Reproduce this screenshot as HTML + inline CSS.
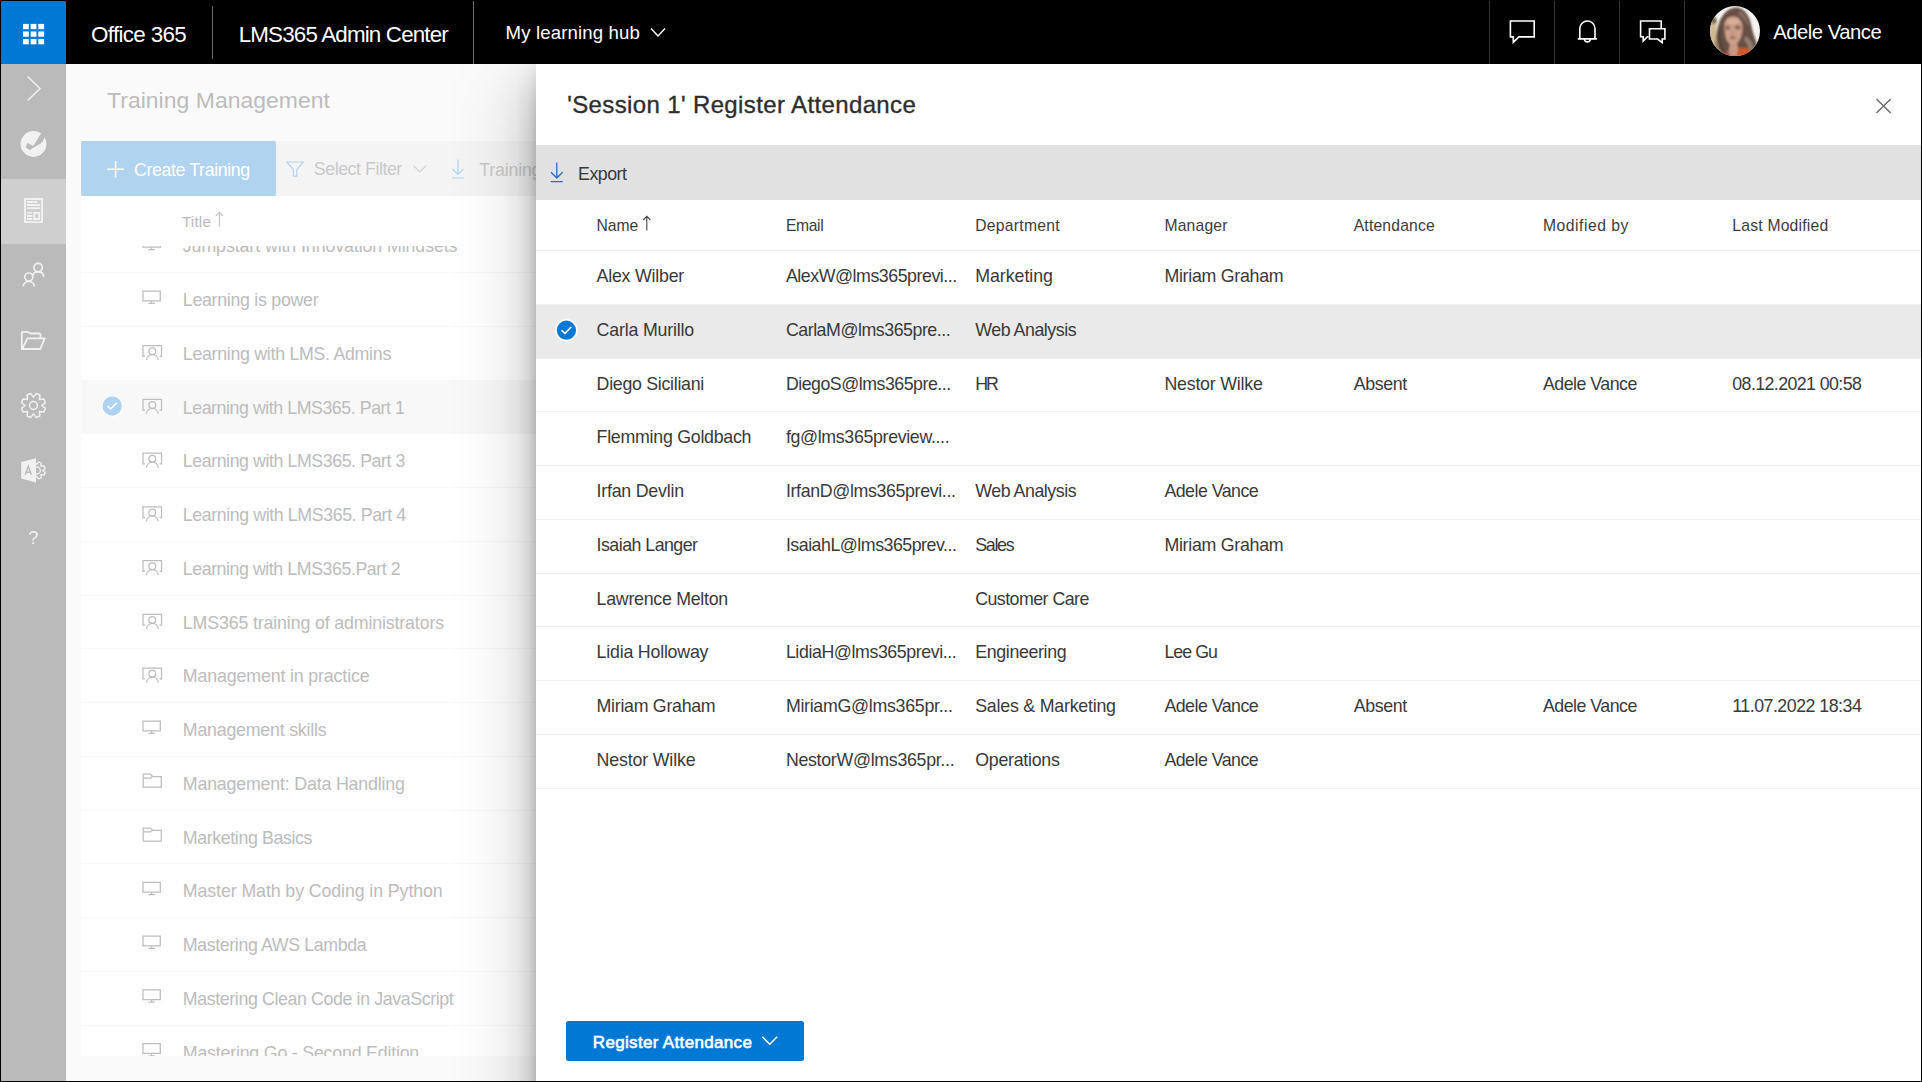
<!DOCTYPE html>
<html><head><meta charset="utf-8"><title>LMS365 Admin Center</title>
<style>
html,body{margin:0;padding:0;}
body{width:1922px;height:1082px;overflow:hidden;background:#000;font-family:"Liberation Sans", sans-serif;position:relative;}
.a{position:absolute;}
.t{position:absolute;white-space:pre;font-family:"Liberation Sans", sans-serif;}
svg{position:absolute;overflow:visible;}
</style></head><body>
<!-- main background -->
<div class="a" style="left:1px;top:64px;width:1920px;height:1017px;background:#fafafa"></div>
<!-- sidebar -->
<div class="a" style="left:1px;top:64px;width:65px;height:1017px;background:#bababa"></div>
<div class="a" style="left:1px;top:179px;width:65px;height:65px;background:#cfcfcf"></div>
<!-- left command bar -->
<div class="a" style="left:81px;top:141px;width:455px;height:55px;background:#f4f4f4"></div>
<div class="a" style="left:81px;top:141px;width:195px;height:55px;background:#b0d3f0;border-radius:2px"></div>
<!-- list white area -->
<div class="a" style="left:81px;top:196px;width:455px;height:860px;background:#fff"></div>
<div class="a" style="left:81px;top:379.8px;width:455px;height:53.75px;background:#f8f8f8"></div>
<div class="a" id="listclip" style="left:0;top:246.3px;width:536px;height:809.7px;overflow:hidden">
 <div class="a" style="left:0;top:-246.3px;width:536px;height:1082px">
 <div class="a" style="left:81px;top:271.6px;width:455px;height:1px;background:#f8f8f8"></div><div class="a" style="left:81px;top:325.6px;width:455px;height:1px;background:#f8f8f8"></div><div class="a" style="left:81px;top:379.6px;width:455px;height:1px;background:#f8f8f8"></div><div class="a" style="left:81px;top:432.6px;width:455px;height:1px;background:#f8f8f8"></div><div class="a" style="left:81px;top:486.6px;width:455px;height:1px;background:#f8f8f8"></div><div class="a" style="left:81px;top:540.6px;width:455px;height:1px;background:#f8f8f8"></div><div class="a" style="left:81px;top:594.6px;width:455px;height:1px;background:#f8f8f8"></div><div class="a" style="left:81px;top:647.6px;width:455px;height:1px;background:#f8f8f8"></div><div class="a" style="left:81px;top:701.6px;width:455px;height:1px;background:#f8f8f8"></div><div class="a" style="left:81px;top:755.6px;width:455px;height:1px;background:#f8f8f8"></div><div class="a" style="left:81px;top:809.6px;width:455px;height:1px;background:#f8f8f8"></div><div class="a" style="left:81px;top:862.6px;width:455px;height:1px;background:#f8f8f8"></div><div class="a" style="left:81px;top:916.6px;width:455px;height:1px;background:#f8f8f8"></div><div class="a" style="left:81px;top:970.6px;width:455px;height:1px;background:#f8f8f8"></div><div class="a" style="left:81px;top:1024.6px;width:455px;height:1px;background:#f8f8f8"></div><div class="a" style="left:81px;top:1077.6px;width:455px;height:1px;background:#f8f8f8"></div>
 <svg class="a" style="left:0;top:0" width="536" height="1082" viewBox="0 0 536 1082" fill="none" stroke="#bdbdbd" stroke-width="1.25"><path d="M143,237.5 H160.3 V247.2 H143 Z M151.6,247.2 V249.5 M148.4,249.7 H154.9" /><path d="M143,291.2 H160.3 V300.9 H143 Z M151.6,300.9 V303.2 M148.4,303.4 H154.9" /><path d="M145,356.3 H143 V345.6 H161.5 V356.3 H159.5" /><circle cx="152.3" cy="351.2" r="3.4" /><path d="M146.4,360.1 a6,6.2 0 0 1 11.9,0" /><path d="M145,410.1 H143 V399.3 H161.5 V410.1 H159.5" /><circle cx="152.3" cy="405.0" r="3.4" /><path d="M146.4,413.9 a6,6.2 0 0 1 11.9,0" /><path d="M145,463.8 H143 V453.1 H161.5 V463.8 H159.5" /><circle cx="152.3" cy="458.8" r="3.4" /><path d="M146.4,467.6 a6,6.2 0 0 1 11.9,0" /><path d="M145,517.6 H143 V506.8 H161.5 V517.6 H159.5" /><circle cx="152.3" cy="512.5" r="3.4" /><path d="M146.4,521.4 a6,6.2 0 0 1 11.9,0" /><path d="M145,571.3 H143 V560.5 H161.5 V571.3 H159.5" /><circle cx="152.3" cy="566.2" r="3.4" /><path d="M146.4,575.1 a6,6.2 0 0 1 11.9,0" /><path d="M145,625.1 H143 V614.3 H161.5 V625.1 H159.5" /><circle cx="152.3" cy="620.0" r="3.4" /><path d="M146.4,628.9 a6,6.2 0 0 1 11.9,0" /><path d="M145,678.8 H143 V668.0 H161.5 V678.8 H159.5" /><circle cx="152.3" cy="673.7" r="3.4" /><path d="M146.4,682.6 a6,6.2 0 0 1 11.9,0" /><path d="M143,721.2 H160.3 V730.9 H143 Z M151.6,730.9 V733.2 M148.4,733.4 H154.9" /><path d="M143.2,774.2 H150.6 L152.8,776.6 H161.3 V787.2 H143.2 Z M143.2,778.0 H150.6 L152.2,776.6" /><path d="M143.2,828.0 H150.6 L152.8,830.4 H161.3 V841.0 H143.2 Z M143.2,831.8 H150.6 L152.2,830.4" /><path d="M143,882.4 H160.3 V892.1 H143 Z M151.6,892.1 V894.4 M148.4,894.6 H154.9" /><path d="M143,936.2 H160.3 V945.9 H143 Z M151.6,945.9 V948.2 M148.4,948.4 H154.9" /><path d="M143,989.9 H160.3 V999.6 H143 Z M151.6,999.6 V1001.9 M148.4,1002.1 H154.9" /><path d="M143,1043.7 H160.3 V1053.4 H143 Z M151.6,1053.4 V1055.7 M148.4,1055.9 H154.9" /></svg>
 <span class="t" style="left:182.8px;top:236px;font-size:17.8px;line-height:20px;color:#bcbcbc;letter-spacing:-0.092px;">Jumpstart with Innovation Mindsets</span><span class="t" style="left:182.8px;top:290px;font-size:17.8px;line-height:20px;color:#bcbcbc;letter-spacing:-0.286px;">Learning is power</span><span class="t" style="left:182.8px;top:344px;font-size:17.8px;line-height:20px;color:#bcbcbc;letter-spacing:-0.291px;">Learning with LMS. Admins</span><span class="t" style="left:182.8px;top:398px;font-size:17.8px;line-height:20px;color:#bcbcbc;letter-spacing:-0.449px;">Learning with LMS365. Part 1</span><span class="t" style="left:182.8px;top:451px;font-size:17.8px;line-height:20px;color:#bcbcbc;letter-spacing:-0.431px;">Learning with LMS365. Part 3</span><span class="t" style="left:182.8px;top:505px;font-size:17.8px;line-height:20px;color:#bcbcbc;letter-spacing:-0.406px;">Learning with LMS365. Part 4</span><span class="t" style="left:182.8px;top:559px;font-size:17.8px;line-height:20px;color:#bcbcbc;letter-spacing:-0.442px;">Learning with LMS365.Part 2</span><span class="t" style="left:182.8px;top:613px;font-size:17.8px;line-height:20px;color:#bcbcbc;letter-spacing:-0.144px;">LMS365 training of administrators</span><span class="t" style="left:182.8px;top:666px;font-size:17.8px;line-height:20px;color:#bcbcbc;letter-spacing:-0.140px;">Management in practice</span><span class="t" style="left:182.8px;top:720px;font-size:17.8px;line-height:20px;color:#bcbcbc;letter-spacing:-0.216px;">Management skills</span><span class="t" style="left:182.8px;top:774px;font-size:17.8px;line-height:20px;color:#bcbcbc;letter-spacing:-0.178px;">Management: Data Handling</span><span class="t" style="left:182.8px;top:828px;font-size:17.8px;line-height:20px;color:#bcbcbc;letter-spacing:-0.387px;">Marketing Basics</span><span class="t" style="left:182.8px;top:881px;font-size:17.8px;line-height:20px;color:#bcbcbc;letter-spacing:-0.100px;">Master Math by Coding in Python</span><span class="t" style="left:182.8px;top:935px;font-size:17.8px;line-height:20px;color:#bcbcbc;letter-spacing:-0.379px;">Mastering AWS Lambda</span><span class="t" style="left:182.8px;top:989px;font-size:17.8px;line-height:20px;color:#bcbcbc;letter-spacing:-0.384px;">Mastering Clean Code in JavaScript</span><span class="t" style="left:182.8px;top:1043px;font-size:17.8px;line-height:20px;color:#bcbcbc;letter-spacing:-0.205px;">Mastering Go - Second Edition</span>
 </div>
</div>
<!-- check circle in list -->
<svg class="a" style="left:100px;top:394px" width="24" height="24" viewBox="0 0 24 24"><circle cx="12.2" cy="12" r="10.8" fill="#fff"/><circle cx="12.2" cy="12" r="9.7" fill="#aed2f0"/><path d="M7.4,11.9 L10.7,15 L16.8,8.7" fill="none" stroke="#fff" stroke-width="1.6"/></svg>
<span class="t" style="left:479.3px;top:160px;font-size:17.8px;line-height:20px;color:#c9c9c9;letter-spacing:-0.199px;">Training</span>
<!-- shadow -->
<div class="a" style="left:446px;top:64px;width:90px;height:1017px;background:linear-gradient(to right,rgba(0,0,0,0) 0%,rgba(0,0,0,0.005) 14%,rgba(0,0,0,0.016) 38%,rgba(0,0,0,0.042) 61%,rgba(0,0,0,0.085) 78%,rgba(0,0,0,0.165) 92%,rgba(0,0,0,0.265) 100%);-webkit-mask-image:linear-gradient(to bottom,rgba(0,0,0,0.25) 0,rgba(0,0,0,0.5) 16px,rgba(0,0,0,0.78) 36px,rgba(0,0,0,0.94) 56px,#000 76px);mask-image:linear-gradient(to bottom,rgba(0,0,0,0.25) 0,rgba(0,0,0,0.5) 16px,rgba(0,0,0,0.78) 36px,rgba(0,0,0,0.94) 56px,#000 76px)"></div>
<!-- panel -->
<div class="a" style="left:536px;top:64px;width:1385px;height:1017px;background:#fff"></div>
<div class="a" style="left:536px;top:145.2px;width:1385px;height:54.5px;background:#e1e1e1"></div>
<div class="a" style="left:536px;top:304.5px;width:1385px;height:53.8px;background:#eaeaea"></div>
<div class="a" style="left:536px;top:250px;width:1385px;height:1px;background:#f0f0f0"></div><div class="a" style="left:536px;top:304px;width:1385px;height:1px;background:#f0f0f0"></div><div class="a" style="left:536px;top:358px;width:1385px;height:1px;background:#f0f0f0"></div><div class="a" style="left:536px;top:411px;width:1385px;height:1px;background:#f0f0f0"></div><div class="a" style="left:536px;top:465px;width:1385px;height:1px;background:#f0f0f0"></div><div class="a" style="left:536px;top:519px;width:1385px;height:1px;background:#f0f0f0"></div><div class="a" style="left:536px;top:573px;width:1385px;height:1px;background:#f0f0f0"></div><div class="a" style="left:536px;top:626px;width:1385px;height:1px;background:#f0f0f0"></div><div class="a" style="left:536px;top:680px;width:1385px;height:1px;background:#f0f0f0"></div><div class="a" style="left:536px;top:734px;width:1385px;height:1px;background:#f0f0f0"></div><div class="a" style="left:536px;top:788px;width:1385px;height:1px;background:#f0f0f0"></div>
<div class="a" style="left:566px;top:1021px;width:238px;height:40px;background:#0078d4;border-radius:2.5px"></div>
<!-- top bar -->
<div class="a" style="left:0;top:0;width:1922px;height:64px;background:#000"></div>
<div class="a" style="left:1px;top:1px;width:65px;height:62.8px;background:#0078d4;border-radius:1.5px"></div>
<div class="a" style="left:212px;top:6px;width:1px;height:53px;background:#6a6a6a"></div>
<div class="a" style="left:473px;top:1px;width:1px;height:63px;background:#6a6a6a"></div>
<div class="a" style="left:1489px;top:1px;width:1px;height:63px;background:#333"></div>
<div class="a" style="left:1554px;top:1px;width:1px;height:63px;background:#333"></div>
<div class="a" style="left:1619px;top:1px;width:1px;height:63px;background:#333"></div>
<div class="a" style="left:1684px;top:1px;width:1px;height:63px;background:#333"></div>
<!-- waffle -->
<svg class="a" style="left:0;top:0" width="66" height="64" viewBox="0 0 66 64" fill="#fff"><rect x="23.00" y="23.90" width="5.8" height="5.3"/><rect x="30.65" y="23.90" width="5.8" height="5.3"/><rect x="38.30" y="23.90" width="5.8" height="5.3"/><rect x="23.00" y="31.45" width="5.8" height="5.3"/><rect x="30.65" y="31.45" width="5.8" height="5.3"/><rect x="38.30" y="31.45" width="5.8" height="5.3"/><rect x="23.00" y="39.00" width="5.8" height="5.3"/><rect x="30.65" y="39.00" width="5.8" height="5.3"/><rect x="38.30" y="39.00" width="5.8" height="5.3"/></svg>
<!-- top bar chevron -->
<svg class="a" style="left:0;top:0" width="1922" height="64" viewBox="0 0 1922 64" fill="none" stroke="#fff" stroke-width="1.6">
<path d="M651,28.6 L658,36 L665,28.6" stroke-width="1.4"/>
<!-- chat -->
<path d="M1510.4,21 H1534.2 V36.9 H1518.9 L1513.3,42.4 V36.9 H1510.4 Z"/>
<!-- bell -->
<path d="M1579.8,38.2 V28.6 a7.6,7.6 0 0 1 15.2,0 V38.2 M1577.8,38.9 H1596.9 M1584.4,39.6 a3.1,3 0 0 0 6,0"/>
<!-- double chat -->
<path d="M1661.2,28 V21 H1640.6 V36.7 H1643.2 V41 L1647.4,36.7 H1648.7"/>
<path d="M1649.5,28.8 H1664.9 V39 H1662.2 V42.6 L1657.6,39 H1649.5 Z"/>
</svg>
<!-- avatar -->
<svg class="a" style="left:1710px;top:6px" width="50" height="50" viewBox="0 0 50 50">
<defs><clipPath id="avc"><circle cx="25" cy="25.1" r="25"/></clipPath><filter id="avb" x="-20%" y="-20%" width="140%" height="140%"><feGaussianBlur stdDeviation="0.9"/></filter><filter id="avb2" x="-30%" y="-30%" width="160%" height="160%"><feGaussianBlur stdDeviation="1.6"/></filter></defs>
<g clip-path="url(#avc)"><rect width="50" height="50" fill="#f6f4f2"/>
<g filter="url(#avb)">
<rect x="-2" y="11" width="8.5" height="32" fill="#cdbb94"/>
<path d="M1,12 L6,11 L6.5,17 L2,18 Z" fill="#6e6445"/>
<path d="M5,50 C5,38 6,26 9,17 C12,8 19,1 27,1.5 C33,2 37,7 39.5,13 C42,20 42,25 44.5,31 C46.5,36 47.5,40 46,46 L44,52 L6,52 Z" fill="#685044"/>
<path d="M36,30 C39,32 42,36 44,42 L40,47 C39,42 37,37 34,34 Z" fill="#948073"/>
<path d="M30,5 C35,8 38,14 39,21 C36,16 33,11 28,8 Z" fill="#8a7060"/>
<path d="M7,30 C7,38 9,44 13,49 L8,50 C5,44 5,36 7,30 Z" fill="#a58865"/>
<path d="M10,18 C10,28 11,38 16,46 L12,46 C8,38 7,27 10,18 Z" fill="#54403a"/>
<path d="M14.5,21 C14,14 18,10.5 23,10.5 C29,10.5 32.5,15 32.5,22 C32.5,29 30,35 26,38.5 C22.5,40.5 18,38 16,32 C15,28 14.6,25 14.5,21 Z" fill="#cda18b"/>
<ellipse cx="23" cy="15.5" rx="5.5" ry="3" fill="#d9ae98"/>
<path d="M20,38 L27,38 L31,50 L18,50 Z" fill="#c89a84"/>
<path d="M28,43 C33,40 40,42 44,46 L40,52 L26,52 Z" fill="#cd5a2b"/>
<path d="M13,47 C16,45 19,46 21,50 L14,52 Z" fill="#b5503a"/>
</g>
<g filter="url(#avb2)">
<ellipse cx="17.4" cy="21.8" rx="2.7" ry="1.6" fill="#5a3c36" opacity="0.85"/>
<ellipse cx="27.8" cy="21.4" rx="2.9" ry="1.6" fill="#5a3c36" opacity="0.85"/>
<ellipse cx="22.8" cy="31.8" rx="3.3" ry="1.3" fill="#8b5248" opacity="0.85"/>
<ellipse cx="22.6" cy="27.4" rx="1.7" ry="1.2" fill="#a87462" opacity="0.7"/>
</g></g></svg>
<!-- sidebar icons -->
<svg class="a" style="left:0;top:64px" width="66" height="500" viewBox="0 64 66 500" fill="none" stroke="#f1f1f1" stroke-width="1.5">
<path d="M27.6,76.4 L40,88.5 L27.6,100.6" stroke-width="1.4"/>
<!-- lms logo -->
<circle cx="33.5" cy="144" r="12.9" fill="#f1f1f1" stroke="none"/>
<path d="M27.5,143 L33.3,146.1 L41,133.4 L48,129 L44.7,137.6 Q43,141.8 40.6,143.6 L29.6,150 L25.6,147.3 Z" fill="#bababa" stroke="none"/>
<!-- document -->
<path d="M25,199 H42.1 V222.1 H25 Z M27,202 H37.2 M27,205 H40.2 M27,208.1 H40.2 M27,212.9 H32.2 M27,216 H32.2 M27,219 H32.2 M34.2,213 H39.2 V219 H34.2 Z" stroke-width="1.9"/>
<!-- people -->
<g stroke-width="1.7"><circle cx="38.1" cy="267.6" r="4.2"/>
<path d="M32.7,275.7 A5.7,5.8 0 0 1 43.8,276.8"/>
<circle cx="28.8" cy="277" r="4"/>
<path d="M23.15,286.4 A5.7,5.8 0 0 1 34.45,286.4"/></g>
<!-- folder open -->
<path d="M22.4,348.7 L27.4,338.3 H44.7 L40.3,349 H21.8 V332.8 Q21.8,331.8 22.8,331.8 H27.4 L30.3,333.5 H39.5 Q40.5,333.5 40.5,334.5 V338.3" stroke-width="1.8" stroke-linejoin="round"/>
<!-- gear -->
<g transform="translate(33.45,405.5)"><circle r="3.9"/><path d="M0,-8.4 L2.83,-11.97 L6.46,-10.46 L5.94,-5.94 L10.46,-6.46 L11.97,-2.83 L8.40,-0.00 L11.97,2.83 L10.46,6.46 L5.94,5.94 L6.46,10.46 L2.83,11.97 L0.00,8.40 L-2.83,11.97 L-6.46,10.46 L-5.94,5.94 L-10.46,6.46 L-11.97,2.83 L-8.40,0.00 L-11.97,-2.83 L-10.46,-6.46 L-5.94,-5.94 L-6.46,-10.46 L-2.83,-11.97 L-0.00,-8.40 Z" stroke-linejoin="round"/></g>
<!-- admin -->
<clipPath id="admc"><rect x="36" y="455" width="14" height="32"/></clipPath>
<g clip-path="url(#admc)"><g transform="translate(36.7,470.4)" stroke-width="1.35"><circle r="3.6"/><path d="M0,-6.0 L2.00,-8.47 L4.57,-7.40 L4.24,-4.24 L7.40,-4.57 L8.47,-2.00 L6.00,-0.00 L8.47,2.00 L7.40,4.57 L4.24,4.24 L4.57,7.40 L2.00,8.47 L0.00,6.00 L-2.00,8.47 L-4.57,7.40 L-4.24,4.24 L-7.40,4.57 L-8.47,2.00 L-6.00,0.00 L-8.47,-2.00 L-7.40,-4.57 L-4.24,-4.24 L-4.57,-7.40 L-2.00,-8.47 L-0.00,-6.00 Z" stroke-linejoin="round"/></g></g>
<path d="M21.2,462.1 L36,458.2 V482.6 L21.2,478.6 Z" fill="#f1f1f1" stroke="none"/>
<path d="M25.3,474.8 L28.3,466.3 L31.3,474.8 M26.4,472.2 H30.2" stroke="#bcbcbc" stroke-width="1.5"/>
</svg>
<!-- left cmd bar icons -->
<svg class="a" style="left:81px;top:141px" width="455" height="110" viewBox="81 141 455 110" fill="none">
<path d="M107.2,169.3 H124 M115.6,161 V177.6" stroke="#fff" stroke-width="1.5"/>
<path d="M286.8,162 H303.4 L296.8,169.6 V176.2 H293.4 V169.6 Z" stroke="#b3d3f0" stroke-width="1.2" stroke-linejoin="round"/>
<path d="M413.4,165.6 L419.8,172 L426.2,165.6" stroke="#cfcfcf" stroke-width="1.2"/>
<path d="M458,159.6 V174.4 M452.6,169 L458,174.4 L463.4,169 M452.4,178 H463.8" stroke="#b3d3f0" stroke-width="1.2"/>
<path d="M219.4,226.8 V212.2 M215.8,215.8 L219.4,212.2 L223,215.8" stroke="#c2c2c2" stroke-width="1.1"/>
</svg>
<!-- panel icons -->
<svg class="a" style="left:536px;top:64px" width="1385" height="1017" viewBox="536 64 1385 1017" fill="none">
<path d="M1876.5,98.9 L1890.7,113 M1890.7,98.9 L1876.5,113" stroke="#666" stroke-width="1.35"/>
<path d="M556.8,162.4 V178 M551,172.2 L556.8,178 L562.6,172.2 M550.8,181.6 H562.8" stroke="#2b6cc4" stroke-width="1.3"/>
<path d="M646.8,230.6 V216.4 M643.2,220 L646.8,216.4 L650.4,220" stroke="#444" stroke-width="1.1"/>
<circle cx="566.4" cy="330.2" r="11.3" fill="#fff"/><circle cx="566.4" cy="330.2" r="9.6" fill="#0078d4"/>
<path d="M561.6,330.2 L564.9,333.4 L571.2,327" stroke="#fff" stroke-width="1.6"/>
<path d="M762.4,1036.8 L769.8,1044.2 L777.2,1036.8" stroke="#fff" stroke-width="1.5"/>
</svg>

<span class="t" style="left:91.0px;top:22px;font-size:22.4px;line-height:25px;color:#fff;letter-spacing:-0.666px;">Office 365</span><span class="t" style="left:238.7px;top:22px;font-size:22.4px;line-height:25px;color:#fff;letter-spacing:-0.841px;">LMS365 Admin Center</span><span class="t" style="left:505.5px;top:22px;font-size:18.6px;line-height:21px;color:#fff;letter-spacing:0.146px;">My learning hub</span><span class="t" style="left:1773.2px;top:21px;font-size:20.3px;line-height:22px;color:#fff;letter-spacing:-0.501px;">Adele Vance</span><span class="t" style="left:107.0px;top:87px;font-size:22.9px;line-height:26px;color:#bcbcbc;letter-spacing:0.062px;">Training Management</span><span class="t" style="left:134.0px;top:160px;font-size:17.8px;line-height:20px;color:#fff;letter-spacing:-0.385px;">Create Training</span><span class="t" style="left:313.8px;top:159px;font-size:17.8px;line-height:20px;color:#c9c9c9;letter-spacing:-0.452px;">Select Filter</span><span class="t" style="left:181.9px;top:213px;font-size:15.2px;line-height:17px;color:#b9b9b9;letter-spacing:0.212px;">Title</span><span class="t" style="left:567.2px;top:91px;font-size:24px;line-height:27px;color:#2e2e2e;letter-spacing:0.375px;-webkit-text-stroke:0.35px #2e2e2e;">&#x27;Session 1&#x27; Register Attendance</span><span class="t" style="left:578.0px;top:164px;font-size:17.8px;line-height:20px;color:#393939;letter-spacing:-0.482px;">Export</span><span class="t" style="left:596.6px;top:217px;font-size:15.7px;line-height:17px;color:#3c3c3c;letter-spacing:-0.090px;">Name</span><span class="t" style="left:785.9px;top:217px;font-size:15.7px;line-height:17px;color:#3c3c3c;letter-spacing:-0.367px;">Email</span><span class="t" style="left:975.2px;top:217px;font-size:15.7px;line-height:17px;color:#3c3c3c;letter-spacing:0.283px;">Department</span><span class="t" style="left:1164.4px;top:217px;font-size:15.7px;line-height:17px;color:#3c3c3c;letter-spacing:0.197px;">Manager</span><span class="t" style="left:1353.7px;top:217px;font-size:15.7px;line-height:17px;color:#3c3c3c;letter-spacing:0.183px;">Attendance</span><span class="t" style="left:1543.0px;top:217px;font-size:15.7px;line-height:17px;color:#3c3c3c;letter-spacing:0.524px;">Modified by</span><span class="t" style="left:1732.3px;top:217px;font-size:15.7px;line-height:17px;color:#3c3c3c;letter-spacing:0.214px;">Last Modified</span><span class="t" style="left:596.6px;top:266px;font-size:17.8px;line-height:20px;color:#393939;letter-spacing:-0.229px;">Alex Wilber</span><span class="t" style="left:785.9px;top:266px;font-size:17.8px;line-height:20px;color:#393939;letter-spacing:-0.460px;">AlexW@lms365previ...</span><span class="t" style="left:975.2px;top:266px;font-size:17.8px;line-height:20px;color:#393939;letter-spacing:-0.031px;">Marketing</span><span class="t" style="left:1164.4px;top:266px;font-size:17.8px;line-height:20px;color:#393939;letter-spacing:-0.270px;">Miriam Graham</span><span class="t" style="left:596.6px;top:320px;font-size:17.8px;line-height:20px;color:#393939;letter-spacing:-0.184px;">Carla Murillo</span><span class="t" style="left:785.9px;top:320px;font-size:17.8px;line-height:20px;color:#393939;letter-spacing:-0.469px;">CarlaM@lms365pre...</span><span class="t" style="left:975.2px;top:320px;font-size:17.8px;line-height:20px;color:#393939;letter-spacing:-0.452px;">Web Analysis</span><span class="t" style="left:596.6px;top:374px;font-size:17.8px;line-height:20px;color:#393939;letter-spacing:-0.286px;">Diego Siciliani</span><span class="t" style="left:785.9px;top:374px;font-size:17.8px;line-height:20px;color:#393939;letter-spacing:-0.501px;">DiegoS@lms365pre...</span><span class="t" style="left:975.2px;top:374px;font-size:17.8px;line-height:20px;color:#393939;letter-spacing:-1.944px;">HR</span><span class="t" style="left:1164.4px;top:374px;font-size:17.8px;line-height:20px;color:#393939;letter-spacing:-0.207px;">Nestor Wilke</span><span class="t" style="left:1353.7px;top:374px;font-size:17.8px;line-height:20px;color:#393939;letter-spacing:-0.360px;">Absent</span><span class="t" style="left:1543.0px;top:374px;font-size:17.8px;line-height:20px;color:#393939;letter-spacing:-0.520px;">Adele Vance</span><span class="t" style="left:1732.3px;top:374px;font-size:17.8px;line-height:20px;color:#393939;letter-spacing:-0.590px;">08.12.2021 00:58</span><span class="t" style="left:596.6px;top:427px;font-size:17.8px;line-height:20px;color:#393939;letter-spacing:-0.266px;">Flemming Goldbach</span><span class="t" style="left:785.9px;top:427px;font-size:17.8px;line-height:20px;color:#393939;letter-spacing:-0.343px;">fg@lms365preview....</span><span class="t" style="left:596.6px;top:481px;font-size:17.8px;line-height:20px;color:#393939;letter-spacing:-0.228px;">Irfan Devlin</span><span class="t" style="left:785.9px;top:481px;font-size:17.8px;line-height:20px;color:#393939;letter-spacing:-0.355px;">IrfanD@lms365previ...</span><span class="t" style="left:975.2px;top:481px;font-size:17.8px;line-height:20px;color:#393939;letter-spacing:-0.452px;">Web Analysis</span><span class="t" style="left:1164.4px;top:481px;font-size:17.8px;line-height:20px;color:#393939;letter-spacing:-0.520px;">Adele Vance</span><span class="t" style="left:596.6px;top:535px;font-size:17.8px;line-height:20px;color:#393939;letter-spacing:-0.528px;">Isaiah Langer</span><span class="t" style="left:785.9px;top:535px;font-size:17.8px;line-height:20px;color:#393939;letter-spacing:-0.491px;">IsaiahL@lms365prev...</span><span class="t" style="left:975.2px;top:535px;font-size:17.8px;line-height:20px;color:#393939;letter-spacing:-1.257px;">Sales</span><span class="t" style="left:1164.4px;top:535px;font-size:17.8px;line-height:20px;color:#393939;letter-spacing:-0.270px;">Miriam Graham</span><span class="t" style="left:596.6px;top:589px;font-size:17.8px;line-height:20px;color:#393939;letter-spacing:-0.275px;">Lawrence Melton</span><span class="t" style="left:975.2px;top:589px;font-size:17.8px;line-height:20px;color:#393939;letter-spacing:-0.536px;">Customer Care</span><span class="t" style="left:596.6px;top:642px;font-size:17.8px;line-height:20px;color:#393939;letter-spacing:-0.211px;">Lidia Holloway</span><span class="t" style="left:785.9px;top:642px;font-size:17.8px;line-height:20px;color:#393939;letter-spacing:-0.412px;">LidiaH@lms365previ...</span><span class="t" style="left:975.2px;top:642px;font-size:17.8px;line-height:20px;color:#393939;letter-spacing:-0.346px;">Engineering</span><span class="t" style="left:1164.4px;top:642px;font-size:17.8px;line-height:20px;color:#393939;letter-spacing:-0.955px;">Lee Gu</span><span class="t" style="left:596.6px;top:696px;font-size:17.8px;line-height:20px;color:#393939;letter-spacing:-0.286px;">Miriam Graham</span><span class="t" style="left:785.9px;top:696px;font-size:17.8px;line-height:20px;color:#393939;letter-spacing:-0.289px;">MiriamG@lms365pr...</span><span class="t" style="left:975.2px;top:696px;font-size:17.8px;line-height:20px;color:#393939;letter-spacing:-0.217px;">Sales &amp; Marketing</span><span class="t" style="left:1164.4px;top:696px;font-size:17.8px;line-height:20px;color:#393939;letter-spacing:-0.520px;">Adele Vance</span><span class="t" style="left:1353.7px;top:696px;font-size:17.8px;line-height:20px;color:#393939;letter-spacing:-0.360px;">Absent</span><span class="t" style="left:1543.0px;top:696px;font-size:17.8px;line-height:20px;color:#393939;letter-spacing:-0.520px;">Adele Vance</span><span class="t" style="left:1732.3px;top:696px;font-size:17.8px;line-height:20px;color:#393939;letter-spacing:-0.508px;">11.07.2022 18:34</span><span class="t" style="left:596.6px;top:750px;font-size:17.8px;line-height:20px;color:#393939;letter-spacing:-0.165px;">Nestor Wilke</span><span class="t" style="left:785.9px;top:750px;font-size:17.8px;line-height:20px;color:#393939;letter-spacing:-0.305px;">NestorW@lms365pr...</span><span class="t" style="left:975.2px;top:750px;font-size:17.8px;line-height:20px;color:#393939;letter-spacing:-0.258px;">Operations</span><span class="t" style="left:1164.4px;top:750px;font-size:17.8px;line-height:20px;color:#393939;letter-spacing:-0.520px;">Adele Vance</span><span class="t" style="left:592.8px;top:1033px;font-size:17px;line-height:19px;color:#fff;letter-spacing:0.331px;-webkit-text-stroke:0.6px #fff;">Register Attendance</span><span class="t" style="left:28.2px;top:528px;font-size:18px;line-height:20px;color:#f1f1f1;">?</span>
<!-- frame -->
<div class="a" style="left:0;top:0;width:1px;height:1082px;background:#000"></div>
<div class="a" style="left:1921px;top:0;width:1px;height:1082px;background:#000"></div>
<div class="a" style="left:0;top:1081px;width:1922px;height:1px;background:#000"></div>
</body></html>
